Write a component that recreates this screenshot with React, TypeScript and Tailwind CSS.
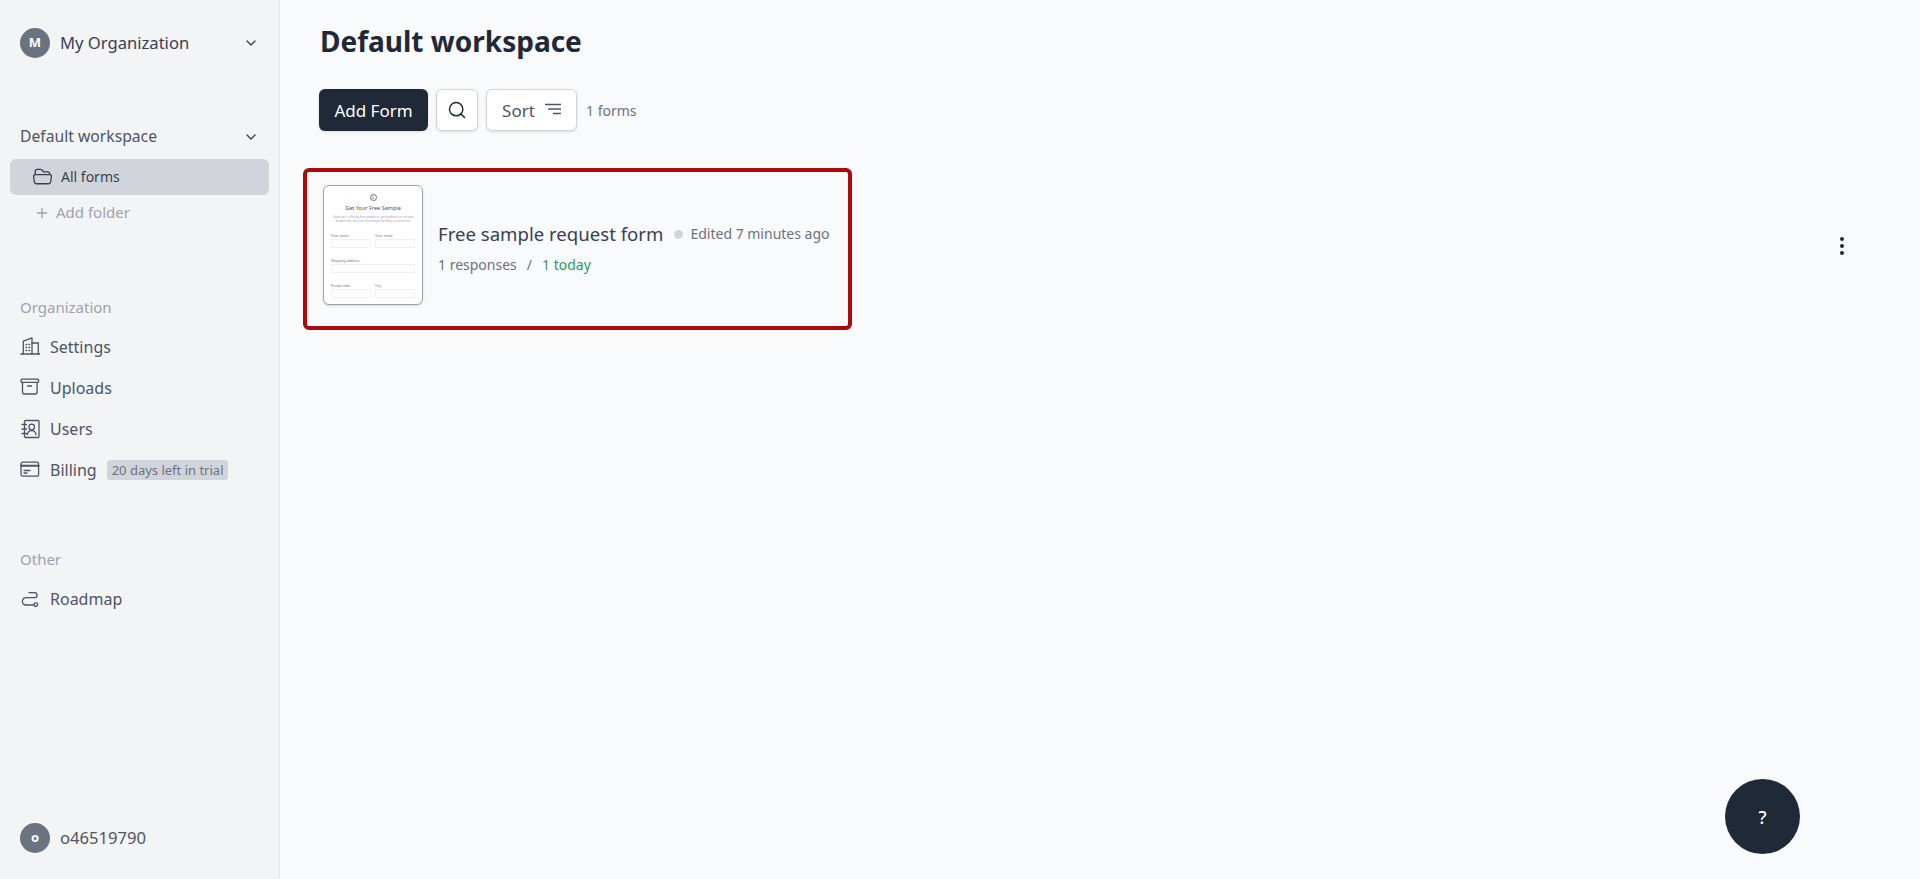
import { ChevronDown, Plus, Search } from 'lucide-react';
import { HiOutlineFolderOpen } from 'react-icons/hi2';

const iconProps = {
  width: 20,
  height: 20,
  viewBox: '0 0 20 20',
  fill: 'none',
  stroke: 'currentColor',
  strokeWidth: 1.3,
  strokeLinecap: 'round' as const,
  strokeLinejoin: 'round' as const,
};

const SettingsIcon = () => (
  <svg {...iconProps}>
    <path d="M.8 17H20" />
    <path d="M3.3 17V4.2L12 .8V17" />
    <path d="M12 6h6.3v11" />
    <path d="M6 7.5h.6M9 7.5h.6M6 10.5h.6M9 10.5h.6M6 13.5h.6M9 13.5h.6" strokeWidth="1.5" />
  </svg>
);

const UploadsIcon = () => (
  <svg {...iconProps}>
    <rect x="1" y="1.2" width="17.6" height="3.2" rx="1" />
    <path d="M2.5 4.4V14a2 2 0 0 0 2 2h10.6a2 2 0 0 0 2-2V4.4" />
    <path d="M7.6 8h4" />
  </svg>
);

const UsersIcon = () => (
  <svg {...iconProps}>
    <rect x="4.5" y="1.5" width="14.5" height="17" rx="1" />
    <path d="M2 5.5h4.5M2 10h4.5M2 14.5h4.5" />
    <circle cx="11.7" cy="8" r="2.8" />
    <path d="M7.4 15.5c.5-2.4 2.2-3.8 4.3-3.8s3.8 1.4 4.3 3.8" />
  </svg>
);

const BillingIcon = () => (
  <svg {...iconProps}>
    <rect x="1" y="2.2" width="17.6" height="14" rx="2" />
    <path d="M1 5.8h17.6" strokeWidth="2" />
    <path d="M4 10.5h6M4 13h3" />
  </svg>
);

const RoadmapIcon = () => (
  <svg {...iconProps}>
    <path d="M9 3.7h5.5a2.5 2.5 0 0 1 0 5H6A3.6 3.6 0 0 0 6 16h8" />
    <circle cx="15.8" cy="15.7" r="1.8" />
  </svg>
);

const SortIcon = () => (
  <svg width="16" height="12" viewBox="0 0 16 12" fill="none" stroke="currentColor" strokeWidth="1.3">
    <path d="M0 1.5h16M3 6h13M8 10.5h8" />
  </svg>
);

const navItems = [
  { label: 'Settings', icon: <SettingsIcon /> },
  { label: 'Uploads', icon: <UploadsIcon /> },
  { label: 'Users', icon: <UsersIcon /> },
];

function Avatar({ letter }: { letter: string }) {
  return (
    <span className="flex h-[30px] w-[30px] items-center justify-center rounded-full bg-[#6b7280] text-[13px] font-bold text-white">
      {letter}
    </span>
  );
}

function NavRow({ icon, label }: { icon: React.ReactNode; label: string }) {
  return (
    <div className="flex h-[41px] items-center">
      <span className="flex w-[30px] text-[#4b5563]">{icon}</span>
      <span className="text-base text-[#4b5563]">{label}</span>
    </div>
  );
}

function MiniField({ label, wide }: { label: string; wide?: boolean }) {
  return (
    <div className={wide ? 'col-span-2' : ''}>
      <div className="mb-[1px] h-[4px] text-[3.5px] leading-[4px] text-[#6b7280]">{label}</div>
      <div className="h-[9px] rounded-[1px] border border-[#eef0f3] bg-white" />
    </div>
  );
}

function Thumbnail() {
  return (
    <div className="mb-[8px] flex h-[120px] w-[100px] shrink-0 flex-col rounded-md border border-[#a3a3a3] bg-white px-[7px] pt-[8px] shadow-sm">
      <div className="mx-auto flex h-[7px] w-[7px] items-center justify-center rounded-full border border-[#6b7280] text-[4px] leading-none text-[#6b7280]">
        $
      </div>
      <div className="mt-[4px] text-center text-[5.5px] leading-[7px] text-[#4b5563]">Get Your Free Sample</div>
      <div className="mt-[3px] text-center text-[2.8px] leading-[4px] text-[#9ca3af]">
        Superliva is offering free samples to get feedback on our new product line. Get your free sample by filling out the form.
      </div>
      <div className="mt-[11px] grid grid-cols-2 gap-x-[4px] gap-y-[11px]">
        <MiniField label="Your name" />
        <MiniField label="Your email" />
        <MiniField label="Shipping address" wide />
        <MiniField label="Postal code" />
        <MiniField label="City" />
      </div>
    </div>
  );
}

export default function App() {
  return (
    <div className="flex h-[879px] overflow-hidden bg-[#f9fafb] font-['Noto_Sans','Open_Sans',sans-serif]">
      <aside className="flex w-[280px] shrink-0 flex-col border-r border-[#e5e7eb] bg-[#f3f4f6]">
        <div className="mt-[28px] flex items-center pl-[20px] pr-[20px]">
          <Avatar letter="M" />
          <span className="ml-[10px] flex-1 text-[16.6px] text-[#374151]">My Organization</span>
          <ChevronDown size={16} className="text-[#374151]" />
        </div>

        <div className="mt-[67px] flex items-center pl-[20px] pr-[20px]">
          <span className="flex-1 text-[15.7px] text-[#4b5563]">Default workspace</span>
          <ChevronDown size={16} className="text-[#374151]" />
        </div>
        <div className="mx-[10px] mt-[10px] flex h-[36px] items-center rounded-md bg-[#d1d5db] pl-[22px] text-sm text-[#374151]">
          <HiOutlineFolderOpen size={21} className="mr-[8px]" />
          All forms
        </div>
        <div className="flex h-[36px] items-center pl-[34px] text-[15px] text-[#9ca3af]">
          <Plus size={16} className="mr-[6px]" />
          Add folder
        </div>

        <div className="mt-[65px] pl-[20px] text-[15px] text-[#9ca3af]">Organization</div>
        <div className="mt-[8px] pl-[20px]">
          {navItems.map((item) => (
            <NavRow key={item.label} icon={item.icon} label={item.label} />
          ))}
          <div className="flex h-[41px] items-center">
            <span className="flex w-[30px] text-[#4b5563]">
              <BillingIcon />
            </span>
            <span className="text-base text-[#4b5563]">Billing</span>
            <span className="ml-[10px] rounded-[3px] bg-[#d1d5db] px-[5px] text-[13px] leading-[20px] text-[#6b7280]">
              20 days left in trial
            </span>
          </div>
        </div>

        <div className="mt-[58px] pl-[20px] text-[15px] text-[#9ca3af]">Other</div>
        <div className="mt-[8px] pl-[20px]">
          <NavRow icon={<RoadmapIcon />} label="Roadmap" />
        </div>

        <div className="mb-[26px] mt-auto flex items-center pl-[20px]">
          <Avatar letter="o" />
          <span className="ml-[10px] text-[16.6px] text-[#4b5563]">o46519790</span>
        </div>
      </aside>

      <main className="relative flex-1 pt-[20px]">
        <h1 className="ml-[40px] text-[28px] font-bold leading-[42px] text-[#1f2937]">Default workspace</h1>

        <div className="ml-[39px] mt-[27px] flex items-center">
          <button className="h-[42px] w-[109px] rounded-md bg-[#1f2937] pt-[2px] text-[17px] text-white shadow">Add Form</button>
          <button className="ml-[8px] flex h-[42px] w-[42px] items-center justify-center rounded-md border border-[#d1d5db] bg-white text-[#1f2937] shadow-sm">
            <Search size={20} strokeWidth={1.75} />
          </button>
          <button className="ml-[8px] flex h-[42px] w-[91px] items-center justify-center gap-[10px] rounded-md border border-[#d1d5db] bg-white pt-[2px] text-[17px] text-[#4b5563] shadow-sm">
            Sort
            <span className="-mt-[5px] flex">
              <SortIcon />
            </span>
          </button>
          <span className="ml-[9px] pt-[1px] text-sm text-[#6b7280]">1 forms</span>
        </div>

        <div className="ml-[23px] mr-[76px] mt-[37px] flex items-center justify-between">
          <div className="flex h-[162px] w-[549px] items-center rounded-md border-4 border-[#a80b0b] pl-[16px]">
            <Thumbnail />
            <div className="ml-[15px] pb-[3px]">
              <div className="flex items-center">
                <span className="text-[18.6px] leading-[28px] text-[#374151]">Free sample request form</span>
                <span className="ml-[11px] h-[9px] w-[9px] rounded-full bg-[#d1d5db]" />
                <span className="ml-[7px] text-sm text-[#6b7280]">Edited 7 minutes ago</span>
              </div>
              <div className="mt-[7px] flex items-center text-sm text-[#6b7280]">
                1 responses
                <span className="mx-[10px]">/</span>
                <span className="text-[#34956a]">1 today</span>
              </div>
            </div>
          </div>
          <div className="mb-[7px] flex flex-col gap-[3px]">
            <span className="h-[4px] w-[4px] rounded-full bg-[#1f2937]" />
            <span className="h-[4px] w-[4px] rounded-full bg-[#1f2937]" />
            <span className="h-[4px] w-[4px] rounded-full bg-[#1f2937]" />
          </div>
        </div>

        <button className="absolute left-[1445px] top-[779px] flex h-[75px] w-[75px] items-center justify-center rounded-full bg-[#1f2937] text-lg font-medium text-white">
          ?
        </button>
      </main>
    </div>
  );
}
